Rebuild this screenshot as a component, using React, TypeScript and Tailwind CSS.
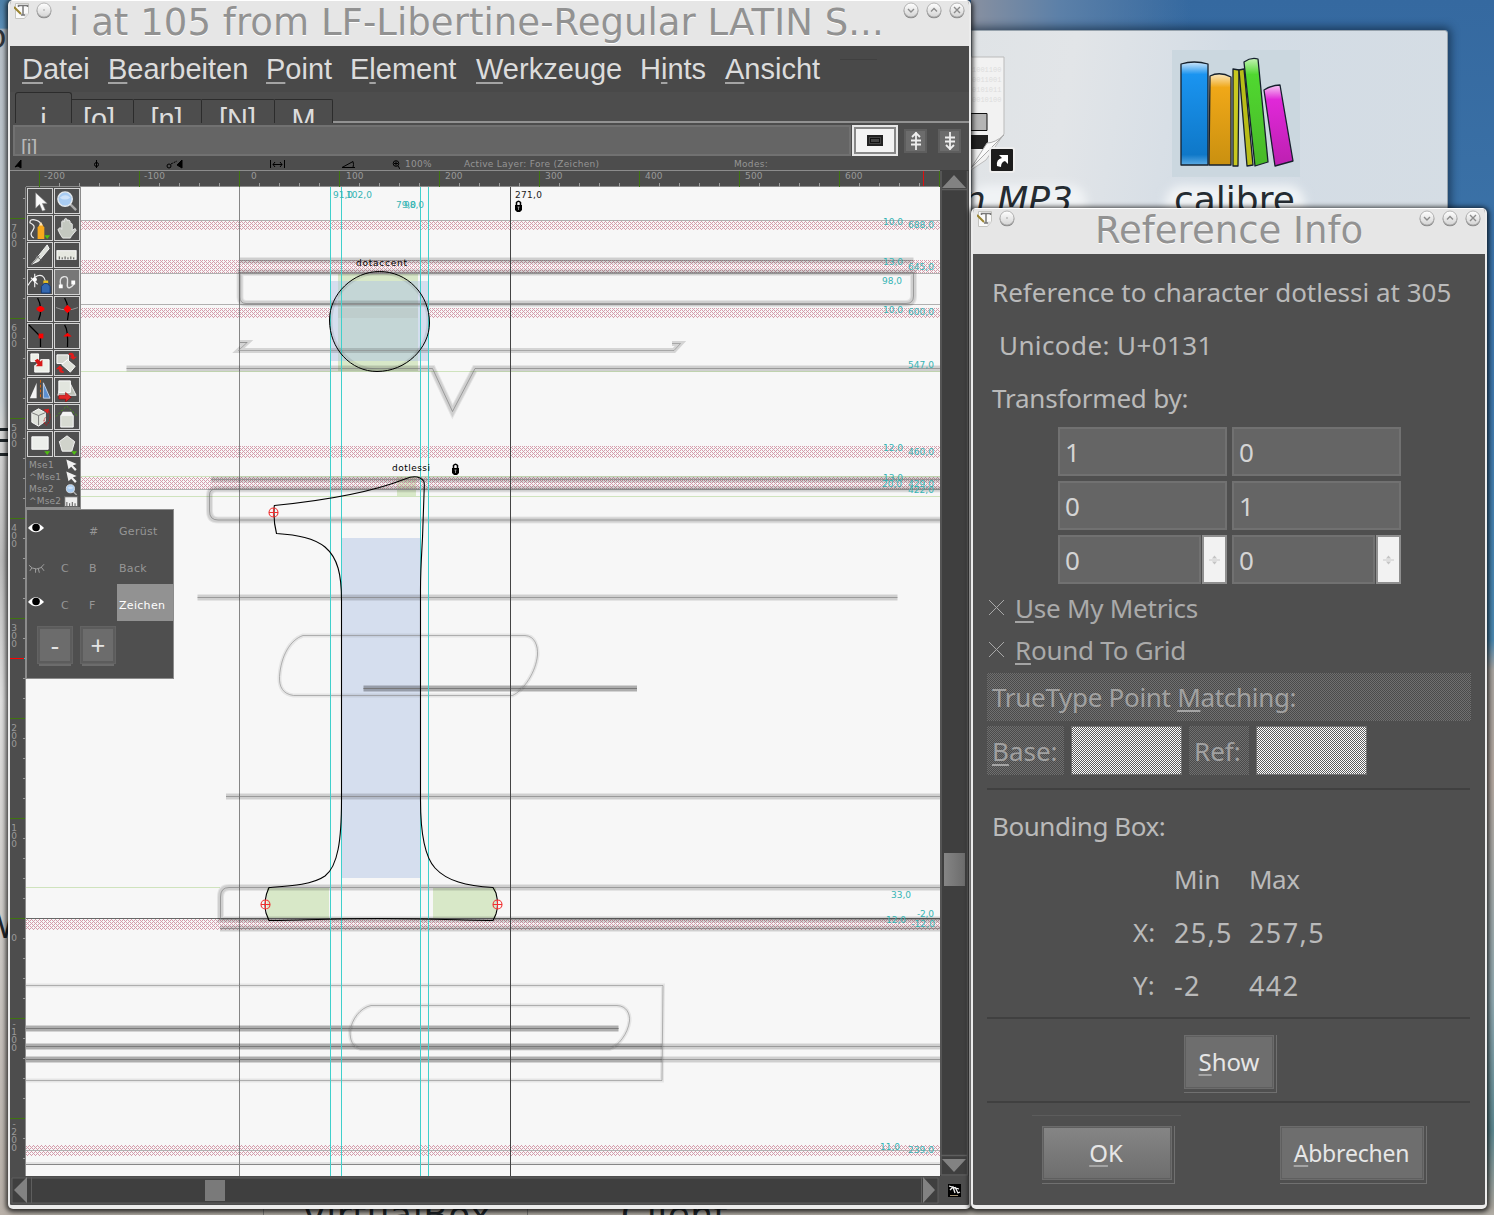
import React from "react";

const range = (from: number, to: number, step: number) => {
  const out: number[] = [];
  for (let v = from; v <= to; v += step) out.push(v);
  return out;
};

function Key({ children }: { children: React.ReactNode }) {
  return <span className="underline decoration-[#a4a4a4] decoration-2 underline-offset-[3px] [text-decoration-skip-ink:none]">{children}</span>;
}

function Knob({ d }: { d: string }) {
  return (
    <svg width="18" height="18" viewBox="0 0 18 18" fill="none">
      <circle cx="9" cy="9.900" r="7.400" fill="#8c8c8c" />
      <circle cx="9" cy="9" r="7" fill="url(#knob)" stroke="#a8a8a8" strokeWidth=".8" />
      <path d={d} stroke="#8c8c8c" strokeWidth="1.400" />
    </svg>
  );
}

function TitleBar({ title, className, textClass }: { title: string; className: string; textClass: string }) {
  return (
    <div className={"relative flex items-start shrink-0 bg-[#e6e6e6] border-t border-white " + className}>
      <svg width="16" height="16" viewBox="0 0 16 16" className="mt-[2px] ml-[4px]">
        <path d="M1.500.5h13v10l-4 5h-9z" fill="#fafafa" stroke="#c4c4c0" />
        <path d="M14.500 10.500h-4v5z" fill="#ddd" />
        <path d="M4.500 4V2.500h9V4M9 2.500V12M7 12h4" fill="none" stroke="#777" strokeWidth="1.500" />
        <path d="M0 4l7 7" stroke="#9a8430" strokeWidth="2" />
      </svg>
      <div className="ml-[5px]"><Knob d="M8.500 9h1" /></div>
      <div className={"flex-1 whitespace-nowrap font-['DejaVu_Sans'] text-[#929292] [text-shadow:0_1px_0_#fff] " + textClass}>{title}</div>
      <div className="absolute right-[3px] top-0 flex gap-[5px]">
        <Knob d="M6 8l3 3 3-3" />
        <Knob d="M6 10.500l3-3 3 3" />
        <Knob d="M6 6l6 6M12 6l-6 6" />
      </div>
    </div>
  );
}

const topLabels: [number, string][] = [[44, "-200"], [144, "-100"], [251, "0"], [346, "100"], [445, "200"], [545, "300"], [645, "400"], [745, "500"], [845, "600"]];

function TopRuler() {
  return (
    <svg className="block shrink-0" width="930" height="17" viewBox="10 170 930 17" shapeRendering="crispEdges">
      <rect x="10" y="170" width="930" height="17" fill="#4d4d4d" />
      <path d="M10 170.500H940M26 186.500H940" stroke="#8c8c8c" />
      {range(39, 939, 20).map((x) => {
        const major = (x - 39) % 100 === 0;
        return <path key={x} d={`M${x + 0.5} ${major ? 171 : 183}V187`} stroke={major ? "#3f7410" : "#9a9a9a"} />;
      })}
      <path d="M923.500 171V186" stroke="#e01010" />
      {topLabels.map(([x, s]) => (
        <text key={s} x={x} y="179" fontSize="9" letterSpacing="0.200" fill="#9a9a9a">{s}</text>
      ))}
    </svg>
  );
}

const sideLabels: [number, string][] = [[231, "700"], [331, "600"], [431, "500"], [531, "400"], [631, "300"], [731, "200"], [831, "100"], [941, "0"], [1027, "-100"], [1127, "-200"]];

function SideRuler() {
  return (
    <svg className="block shrink-0" width="16" height="989" viewBox="10 187 16 989" shapeRendering="crispEdges">
      <rect x="10" y="187" width="16" height="989" fill="#4d4d4d" />
      {range(198, 1170, 20).map((y) => {
        const major = (y - 218) % 100 === 0;
        return <path key={y} d={`M${major ? 10 : 23} ${y + 0.5}H26`} stroke={major ? "#3f7410" : "#9a9a9a"} />;
      })}
      <path d="M10 658.500H24" stroke="#f00" />
      <path d="M24 658.500H26" stroke="#2cc" />
      <path d="M25.500 187V1176" stroke="#8c8c8c" />
      {sideLabels.map(([y, s]) =>
        s.split("").map((c, i) => (
          <text key={s + i} x="13.500" textAnchor="middle" dx=".5" y={y + i * 8} fontSize="9" fill="#9a9a9a">{c}</text>
        ))
      )}
    </svg>
  );
}

const stems = [
  "M240 260.500H913.500",
  "M240 272.500H913.500V296Q913.500 303.500 906 303.500H246Q240 303.500 240 297Z",
  "M126.500 368.500H432.500L452.500 411.500L475 368.500H940",
  "M211 479.500H940",
  "M940 489H216Q209.500 489 209.500 495V511Q209.500 520 218 520H940",
  "M197.500 597.500H897.500",
  "M363.500 688.500H637",
  "M363.500 688.500H637",
  "M226 796.500H940",
  "M940 887.500H229Q220.500 887.500 220.500 897V919.500H940",
  "M220 928.500H940",
  "M26 1028.500H618.500",
  "M26 1028.500H618.500",
  "M26 1046.500H940",
  "M26 1046.500H662",
  "M26 1059.500H940",
  "M26 1059.500H662",
];
const thin = [
  "M247.500 342.500H240L247 342.500L238.500 350.500H674L680.500 343.500H672",
  "M303 635.500H525C535 636 538 646 537.500 655C536 672 524 690 512.500 695.500H293.500C283 694 279 687 279.500 676.500C281 656 290 640 303 635.500Z",
  "M26 985.500H663L662 1080.500H26",
  "M371 1005.500H617C627 1006 630 1014 629.500 1021C628 1034 618 1046 610 1049H360C352 1046 350 1040 350 1031C352 1019 360 1008 371 1005.500Z",
];
const bands: [number, number][] = [[221, 9], [260, 13], [308, 10], [446, 12], [477, 12], [919, 11], [1145, 11]];
const notes: [number, number, string][] = [
  [333, 198, "91,0"], [346, 198, "102,0"], [396, 208, "79,0"], [404, 208, "98,0"],
  [883, 225, "10,0"], [908, 227.5, "688,0"], [883, 265, "13,0"], [908, 270, "645,0"], [882, 284, "98,0"],
  [883, 313, "10,0"], [908, 315, "600,0"], [908, 368, "547,0"], [883, 451, "12,0"], [908, 455, "460,0"],
  [883, 481, "13,0"], [882, 487, "20,0"], [908, 487, "429,0"], [908, 493, "422,0"], [891, 898, "33,0"],
  [917, 917, "-2,0"], [886, 923, "12,0"], [911, 927, "-12,0"], [880, 1150, "11,0"], [908, 1153, "239,0"],
];

function Lock({ x, y }: { x: number; y: number }) {
  return (
    <g transform={`translate(${x} ${y})`}>
      <path d="M-2 -1V-3.500Q0 -6 2 -3.500V-1" fill="none" stroke="#000" strokeWidth="1.500" />
      <path d="M-3.500 -1H3.500V4L1.500 6H-1.500L-3.500 4Z" fill="#000" />
      <path d="M-1 1h2M0 1v3" stroke="#aaa" strokeWidth=".8" />
    </g>
  );
}

function Canvas() {
  return (
    <svg className="block" width="914" height="989" viewBox="26 187 914 989" fill="none">
      <defs>
        <pattern id="hatch" width="4" height="4" patternUnits="userSpaceOnUse">
          <path d="M0 0h1v1h-1zM2 0h1v1h-1zM1 1h1v1h-1zM0 2h1v1h-1zM2 2h1v1h-1zM3 3h1v1h-1z" fill="#d59cab" shapeRendering="crispEdges" />
        </pattern>
      </defs>
      <rect x="26" y="187" width="914" height="989" fill="#f7f7f7" />
      <g shapeRendering="crispEdges">
        <path d="M397 477h19v20h-19zM267 888h62v31h-62zM433 888h63v31h-63zM338 273h80v99h-80z" fill="#d8e8c8" />
        <path d="M341 538h79v340h-79zM331 281h98v80h-98z" fill="#d5deee" />
        {bands.map(([y, h]) => <rect key={y} x="26" y={y} width="914" height={h} fill="url(#hatch)" />)}
        <path d="M331 308h98v10h-98z" fill="#d5deee" />
        <path d="M338 281h80v80h-80z" fill="#c4d6d6" />
        <path d="M338 308h80v10h-80z" fill="#becdcc" />
        <path d="M26 220.500H940M26 273.500H940M26 304.500H940M26 489.500H940M26 1150.500H940" stroke="#b0b0b0" />
        <path d="M26 371.500H940M26 476.500H940M26 496.500H940M26 887.500H220" stroke="#cfe3bd" />
        <path d="M26 1164.500H940" stroke="#868686" />
        <path d="M26 1163H940" stroke="#e2e2e2" strokeWidth="2" />
        <path d="M239.500 187V1176" stroke="#868686" />
        <path d="M26 918.500H940" stroke="#666" />
      </g>
      {stems.map((d, i) => (
        <g key={i}>
          <path d={d} stroke="#000" strokeOpacity=".075" strokeWidth="7" />
          <path d={d} stroke="#000" strokeOpacity=".09" strokeWidth="5" />
          <path d={d} stroke="#777" strokeOpacity=".6" />
        </g>
      ))}
      {thin.map((d, i) => (
        <g key={i}>
          <path d={d} stroke="#000" strokeOpacity={i ? 0.07 : 0.14} strokeWidth={i ? 4 : 5} />
          <path d={d} stroke="#888" strokeOpacity=".6" />
        </g>
      ))}
      <path d="M330.500 187V1176M341.500 187V1176M420.500 187V1176M428.500 187V1176" stroke="#40d0cc" shapeRendering="crispEdges" />
      <path d="M510.500 187V1176" stroke="#444" shapeRendering="crispEdges" />
      <g strokeLinejoin="round">
        <circle cx="379.500" cy="321.500" r="48.500" stroke="#000" strokeOpacity=".08" strokeWidth="3" />
        <path d="M379.500 271.500C407 271.500 429.500 294 429.500 323C429.500 348 406 371.500 377 371.500C351 371.500 329.500 349 329.500 320C329.500 294 353 271.500 379.500 271.500Z" stroke="#000" />
        <path
          d="M274.300 505.500C320 501 372 492 405 479C412 476 416 476 420 478C424 480 424.500 482 424.300 486L422.500 538C421.500 556 420.500 570 420.500 590V800C420.500 830 424 856 435 868C447 881 466 886 493 887.500L496 893Q499 905 496 914L493 920.500C470 920.500 430 918.500 380 918.500C330 918.500 295 920.500 269 920.500L266 913Q264 904 266.500 894L269 887.500C290 886 312 885 325 876C338 866 341.500 840 341.500 800V600C341.500 575 338 558 325 547C314 538 298 535 276.500 533.500Q273 520 274.300 505.500Z"
          stroke="#000" strokeWidth="1.100"
        />
      </g>
      {[[273.5, 512.5], [265.5, 904.5], [497.5, 904.5]].map(([x, y]) => (
        <g key={x} stroke="#f03030" strokeWidth="1.100">
          <circle cx={x} cy={y} r="4.500" />
          <path d={`M${x - 4.5} ${y}h9M${x} ${y - 4.5}v9`} />
        </g>
      ))}
      <g fontSize="9">
        {notes.map(([x, y, s], i) => (
          <text key={i} x={x} y={y} fill="#35b4b4" textLength={s === "-12,0" ? 24 : s.length === 5 ? 26 : s.startsWith("-") ? 17 : 20}>{s}</text>
        ))}
        <text x="515" y="198" fill="#222" textLength="27">271,0</text>
        <text x="356" y="266" fill="#000" textLength="51">dotaccent</text>
        <text x="392" y="471" fill="#000" textLength="38">dotlessi</text>
      </g>
      <Lock x={518.5} y={206} />
      <Lock x={455.5} y={469} />
    </svg>
  );
}

const dropMark = <path d="M17 20h6l-3 4z" fill="#4fc010" />;
const redArrow = <path d="M2 15h7v-3l6 5-6 5v-3H2z" fill="#e02828" stroke="#900" strokeWidth=".6" />;
const lens = (
  <>
    <path d="M15 15l7 7" stroke="#aaa" strokeWidth="2.500" />
    <circle cx="10.500" cy="10.500" r="7.500" fill="#a9ccf2" stroke="#e4e9ee" strokeWidth="1.500" />
    <path d="M5 9q6-5 11 0-6 4-11 0" fill="#cfe2f8" />
  </>
);
const tools: React.ReactNode[] = [
  <path d="M8 4v16l4-4 3 7 3-1-3-7h5z" fill="#fafafa" stroke="#888" strokeWidth=".6" />,
  lens,
  <><path d="M6 23Q1 20 5 15T2 7Q2 3 7 4t6 4" fill="none" stroke="#eee" strokeWidth="1.300" /><path d="M10 24V12l3.500-5 3.500 5v12z" fill="#f6a81c" /><path d="M11.500 10l2-4 2 4z" fill="#fbe3b8" /><path d="M17 20h6l-3 4z" fill="#4fc010" /></>,
  <path d="M8 23q-3-4-5-9l2.500-2L7 14V6q1-2.500 2.700 0V3.500q1.500-2 3 0V5q2-2 3 .5L16 8q1.500-1 2 .5V15l3-2 1 2-5 6-1 2z" fill="#c4c8c0" stroke="#f2f2f2" strokeWidth=".9" />,
  <><path d="M20 2L4 22l7-3L22 6z" fill="#dde0da" stroke="#f8f8f8" /><path d="M8 13l6 5M4 22l8-9" stroke="#666" fill="none" /></>,
  <><rect x="2" y="8" width="20" height="9" fill="#e6e8e0" stroke="#fff" /><path d="M4.500 17v-3M7.500 17v-2M10.500 17v-3M13.500 17v-2M16.500 17v-3M19.500 17v-2" stroke="#444" /></>,
  <><path d="M0 16q4-7 10-10 6-2 8 5M7 4v14M3 8l7 7" stroke="#f2f2f2" fill="none" strokeWidth="1.200" /><circle cx="7" cy="10" r="2.300" fill="#fff" /><path d="M16 11h5v3h-5z" fill="#e8c020" /><path d="M14 24v-7l3-3h3l3 3v7z" fill="#3468b0" stroke="#153c78" /></>,
  <><rect width="25" height="25" fill="#777" /><path d="M6 16q-2-8 3-9t4 6 3 5 4-6" stroke="#e0e0e0" fill="none" strokeWidth="1.500" /><path d="M4 15h4v4H4zM17 11h4v4h-4z" fill="#fff" /></>,
  <><path d="M10 1q6 11 1 23" fill="none" stroke="#000" strokeWidth="1.300" /><path d="M9 11h8v3H9z" fill="#f00" /><circle cx="13" cy="12.500" r="3" fill="#f00" /></>,
  <><path d="M1 11q11 5 23 0" fill="none" stroke="#999" /><path d="M10 1q6 11 3 23" fill="none" stroke="#000" strokeWidth="1.300" /><path d="M13 8l4 4.500-4 4.500-4-4.500z" fill="#f00" /><circle cx="13" cy="12.500" r="3" fill="#f00" /></>,
  <><path d="M1 1l12 12v11" fill="none" stroke="#000" strokeWidth="1.300" /><path d="M11 10h5v5h-5z" fill="#f00" /></>,
  <><path d="M10 1q4 6 3 23" fill="none" stroke="#000" strokeWidth="1.300" /><path d="M8.500 13l4.500-4 4.500 4z" fill="#f00" /></>,
  <><path d="M3 3h8v8H3zM13 9h9v13H7v-7" fill="#ecefe8" stroke="#fff" /><path d="M7 10l3-2 3 3 2-2v7H8l2-2z" fill="#d81818" /></>,
  <><path d="M2 4h12v9H2z" fill="#d4d7d0" stroke="#fff" /><path d="M13 9l8 7-5 6-9-8z" fill="#dfe2da" stroke="#fff" /><path d="M15 2q5-1 5 4h3l-4 3-4-3h2q0-2-3-2zM9 23q-5 0-5-4H1l4-4 4 4H7q0 2 2 2z" fill="#e01c1c" /></>,
  <><path d="M9 5v16H2z" fill="#f4f4f4" /><path d="M13 2v20" stroke="#e06a10" strokeDasharray="3 2" /><path d="M16 5v16h7z" fill="#5b8fd0" stroke="#dce8f8" strokeWidth=".8" /></>,
  <><path d="M15 4l7 14H9l-6 0 4-14z" fill="#b9bdb4" stroke="#eee" /><path d="M4 3h12v12H4z" fill="#e2e5de" stroke="#fff" /><g transform="translate(2 3)">{redArrow}</g></>,
  <><path d="M4 8l7-4 7 4v9l-7 5-7-4z" fill="#dfe2da" stroke="#fff" /><path d="M4 8l7 3 7-3M11 11v10" stroke="#777" fill="none" /><path d="M16 5l6-1-1 5z" fill="#e02020" /><path d="M22 6q3 10-3 15-4-3-1-8" stroke="#c01010" fill="none" strokeDasharray="2 1" /></>,
  <><path d="M1 12L12 1l12 11" stroke="#4aa010" fill="none" strokeDasharray="2 2" /><path d="M6 11h13v12H6z" fill="#d8dbd2" stroke="#fafafa" /><path d="M8 7h9l2 4H6z" fill="#f4f4f4" /></>,
  <><path d="M4 5h17v13H4z" fill="#eceeea" stroke="#fff" />{dropMark}</>,
  <><path d="M12.500 4l8 6-3 10h-10l-3-10z" fill="#d0d3cb" stroke="#f4f4f4" />{dropMark}</>,
];

function ToolPalette() {
  return (
    <div className="w-[55px] h-[322px] bg-[#4f4f4f] border-r border-[#8c8c8c] border-b-2">
      <div className="grid grid-cols-2 gap-x-[1px] gap-y-[1px] pt-[1px] pl-[1px]">
        {tools.map((t, i) => (
          <div key={i} className="w-[26px] h-[26px] border border-[#d4d4d4]">
            <svg width="24" height="24" viewBox="0 0 25 25" className="block">{t}</svg>
          </div>
        ))}
      </div>
      <div className="relative pl-[3px] pt-[2px] text-[9px] leading-[12px] tracking-[0.3px] text-[#999]">
        {["Mse1", "^Mse1", "Mse2", "^Mse2"].map((s, i) => (
          <div key={s} className="flex justify-between pr-px">
            <span className={i % 2 ? "tracking-[0.2px]" : ""}>{s}</span>
            <svg width="15" height="12" viewBox="0 0 25 22" className="shrink-0">
              {i < 2 ? <path d="M3 1l4 18 5-5 7 8 3-3-7-7 7-3z" fill="#f2f2f2" /> : i === 2 ? lens : <path d="M0 3h24v18H0z M4 20v-7M9 20v-5M14 20v-7M19 20v-5" fill="#eee" stroke="#666" strokeWidth="2" />}
            </svg>
          </div>
        ))}
      </div>
    </div>
  );
}

function Eye({ open }: { open: boolean }) {
  return (
    <svg width="17" height="12" viewBox="0 0 18 12" fill="none">
      {open ? (
        <><path d="M0 6Q8-4 17 6Q8 15 0 6z" fill="#fff" /><circle cx="8.500" cy="5.500" r="4" fill="#000" /></>
      ) : (
        <path d="M1 3q3 4 8 4t8-5M4 6l-2 3M8 7v4M11 7l1 4M14 5l3 4" stroke="#a4a4a4" />
      )}
    </svg>
  );
}

function Layers() {
  const rows: [boolean, string, string, string][] = [[true, "", "#", "Gerüst"], [false, "C", "B", "Back"], [true, "C", "F", "Zeichen"]];
  return (
    <div className="w-[148px] h-[170px] bg-[#4f4f4f] border border-[#8c8c8c] text-[11px] tracking-[0.3px] text-[#969696]">
      <div>
        {rows.map(([open, c, k, name], i) => (
          <div key={name} className="flex h-[37px] items-center">
            <div className={"w-[34px] pl-px " + (open ? "-mt-[2px]" : "mt-[4px]")}><Eye open={open} /></div>
            <span className="w-[28px] mt-[7px]">{c}</span>
            <span className="w-[28px] mt-[7px]">{k}</span>
            <span className={"flex-1 h-[37px] leading-[43px] pl-[2px] whitespace-nowrap " + (i === 2 ? "bg-[#929292] text-white" : "")}>{name}</span>
          </div>
        ))}
      </div>
      <div className="flex gap-[9px] pl-[11px] pt-[6px]">
        {["-", "+"].map((s) => (
          <div key={s} className="w-[34px] h-[36px] bg-[#6c6c6c] border-2 border-[#5c5c5c] outline outline-[#636363] text-[#e4e4e4] font-['Noto_Sans'] text-[26px] leading-[32px] text-center shadow-[0_4px_0_-1px_#6c6c6c]">{s}</div>
        ))}
      </div>
    </div>
  );
}

function ArrowBtn({ up }: { up?: boolean }) {
  return (
    <div className="flex w-[23px] h-[24px] items-center justify-center bg-[#6c6c6c] border-2 border-[#5e5e5e]">
      <svg width="14" height="20" viewBox="0 0 14 20" fill="none" stroke="#eee" strokeWidth="1.800" className={"shrink-0 " + (up ? "" : "rotate-180")}>
        <path d="M7 1v18M3 6l4-4 4 4M2 9.500h10M2 13.500h10" />
      </svg>
    </div>
  );
}

function EditorWindow() {
  const menus: [string, string, string, string][] = [
    ["", "D", "atei", "w-[86px]"], ["", "B", "earbeiten", "w-[158px]"], ["", "P", "oint", "w-[84px]"], ["E", "l", "ement", "w-[126px]"],
    ["", "W", "erkzeuge", "w-[164px]"], ["H", "i", "nts", "w-[85px]"], ["", "A", "nsicht", "w-[100px]"],
  ];
  const tabs: [string, string, string][] = [["[o]", "w-[62px]", "pr-[7px]"], ["[n]", "w-[68px]", "pr-[2px]"], ["[N]", "w-[73px]", "pr-[1px]"], ["M", "w-[58px]", ""]];
  return (
    <div className="absolute left-[8px] top-0 w-[963px] h-[1209px] flex flex-col bg-[#4d4d4d] border-x-2 border-b-4 border-[#ececec] rounded-[5px] shadow-[0_1px_5px_2px_rgba(0,0,0,0.75)] overflow-hidden">
      <TitleBar title="i at 105 from LF-Libertine-Regular LATIN S..." className="h-[46px]" textClass="text-[37px] leading-[44px] ml-[16px] tracking-[0.050px]" />
      <div className="flex shrink-0 h-[46px] pl-[12px] bg-[#494949] font-['Liberation_Sans'] text-[29px] leading-[46px] text-[#dcdcdc]">
        {menus.map(([a, k, b, w]) => (
          <div key={b} className={"whitespace-nowrap " + w}>{a}<Key>{k}</Key>{b}</div>
        ))}
        <div className="mt-[13px] ml-[15px] h-px w-[37px] bg-[#404040]" />
      </div>
      <div className="flex shrink-0 items-start h-[31px] overflow-hidden pl-[5px] font-['Liberation_Sans'] text-[29px] text-[#dcdcdc] text-center">
        <div className="w-[57px] h-[31px] border border-b-0 border-[#2c2c2c] rounded-t-[3px] leading-[52px]">i</div>
        {tabs.map(([t, w, p]) => (
          <div key={t} className={"mt-[7px] h-[24px] border-t border-r border-[#2c2c2c] rounded-tr-[2px] leading-[38px] " + w + " " + p}>{t}</div>
        ))}
        <div className="flex-1 self-end h-[2px] mb-0 bg-[#929292]" />
      </div>
      <div className="flex shrink-0 h-[33px] pt-[2px] items-start">
        <div className="ml-[3px] w-[838px] h-[31px] overflow-hidden bg-[#656565] border-2 border-[#717171] pl-[6px] font-['Liberation_Sans'] text-[21px] leading-[40px] text-[#b8b8b8]">[i]</div>
        <div className="ml-px flex w-[46px] h-[31px] items-center justify-center bg-[#f4f4f4] border-2 border-[#e8e8e8] outline-2 -outline-offset-4 outline-[#888]">
          <div className="w-[16px] h-[11px] border-2 border-[#222] bg-[#444] outline outline-[#111] -outline-offset-4" />
        </div>
        <div className="flex gap-[11px] ml-[6px] mt-[4px]"><ArrowBtn up /><ArrowBtn /></div>
      </div>
      <div className="flex shrink-0 h-[14px] text-[9px] leading-[16px] tracking-[0.3px] text-[#959595]">
        <svg width="390" height="14" viewBox="10 156 390 14" fill="none" stroke="#000" className="mr-[5px]">
          <path d="M21 160v8l-3-2-3 1z" fill="#000" />
          <path d="M96.500 160v8" /><circle cx="96.500" cy="164.500" r="2" />
          <circle cx="169" cy="166" r="2" /><path d="M171 164l6-3" strokeDasharray="2 1" /><path d="M182 160v8l-5-3z" fill="#000" />
          <path d="M270.500 160v8M284.500 160v8M273 164.500h9M275 162l-2 2.500 2 2.500M280 162l2 2.500-2 2.500" />
          <path d="M355 167.500h-13l11-6q1 3 0 6" />
          <circle cx="396" cy="163.500" r="2.800" /><path d="M394 163.500h4M396 161.500v4M398 166l2 3" />
        </svg>
        <span className="w-[59px]">100%</span>
        <span className="w-[270px] whitespace-nowrap">Active Layer: Fore (Zeichen)</span>
        <span>Modes:</span>
      </div>
      <div className="flex shrink-0">
        <div className="flex flex-col">
          <TopRuler />
          <div className="flex">
            <SideRuler />
            <div className="relative">
              <Canvas />
              <div className="absolute left-0 top-0"><ToolPalette /><Layers /></div>
            </div>
          </div>
        </div>
        <svg width="29" height="1006" viewBox="940 170 29 1006">
          <defs><linearGradient id="grip"><stop stopColor="#858585" /><stop offset="1" stopColor="#6c6c6c" /></linearGradient></defs>
          <path d="M940 170h29v1006h-29z" fill="#3f3f3f" />
          <path d="M941 171V1175M967.500 171V1175H941M942 189.500H967M941 1155.500H967" stroke="#5e5e5e" fill="none" strokeWidth="1.500" />
          <path d="M942 188l12-13 12 13zM942 1159l12 13 12-13z" fill="#828282" />
          <rect x="944" y="853" width="21" height="33" fill="url(#grip)" />
        </svg>
      </div>
      <svg className="shrink-0" width="959" height="29" viewBox="10 1176 959 29">
        <path d="M10 1176h959v29H10z" fill="#4d4d4d" />
        <path d="M12 1178h926v25H12z" fill="#3f3f3f" stroke="#5e5e5e" />
        <path d="M31.500 1177v26M921.500 1177v26" stroke="#5e5e5e" />
        <path d="M27 1177v26l-13-13zM923 1177v26l12-13z" fill="#828282" />
        <path d="M205 1180h20v21h-20z" fill="#7a7a7a" />
        <path d="M948 1184h13v13h-13z" fill="#000" />
        <path d="M949 1186l10 3M950 1190l3-3 2 6M955 1187l3 6 2-1" stroke="#eee" strokeWidth="1.300" fill="none" />
        <path d="M950 1195.500h8" stroke="#a09070" />
      </svg>
    </div>
  );
}

const dither = "[background-image:conic-gradient(#707070_25%,#4a4a4a_0_50%,#707070_0_75%,#4a4a4a_0)] [background-size:2px_2px]";
const ditherLight = "[background-image:conic-gradient(#fff_25%,#5c5c5c_0_50%,#fff_0_75%,#5c5c5c_0)] [background-size:2px_2px]";

function Separator({ className }: { className: string }) {
  return <div className={"shrink-0 h-[2px] w-[483px] bg-[#404040] ml-[14px] " + className} />;
}

function Entry({ v, spin }: { v: string; spin?: boolean }) {
  const box = "h-[49px] bg-[#656565] border-2 border-[#717171] pl-[5px] leading-[46px]";
  if (!spin) return <div className={"w-[169px] " + box}>{v}</div>;
  return (
    <div className="flex w-[169px] gap-px">
      <div className={"flex-1 " + box}>{v}</div>
      <div className="w-[25px] h-[49px] border-2 border-[#8f8f8f] bg-[#f2f2f2] flex items-center justify-center">
        <svg width="11" height="10" viewBox="0 0 11 10"><path d="M0 5h11" stroke="#c4c4c4" strokeWidth=".9" /><path d="M5.500 .5l2.500 3h-5zM5.500 9.500l2.500-3h-5z" fill="#c4c4c4" /></svg>
      </div>
    </div>
  );
}

function Button({ k, children, className }: { k: string; children: string; className: string }) {
  return (
    <div className="border-r border-b border-[#707070] pr-[2px] pb-[3px]">
      <div className={"h-[54px] border-2 border-[#5f5f5f] outline outline-[#6c6c6c] -outline-offset-1 text-center leading-[50px] text-[#e6e6e6] " + className}>
        <Key>{k}</Key>{children}
      </div>
    </div>
  );
}

function Check({ k, children }: { k: string; children: string }) {
  return (
    <div className="flex h-[42px] items-center pl-[16px] text-[#aaa] tracking-[-0.250px]">
      <svg width="15" height="15" viewBox="0 0 15 15" className="mr-[11px] -mt-[2px]"><path d="M0 0l15 15M15 0L0 15" stroke="#a8a8a8" /></svg>
      <span><Key>{k}</Key>{children}</span>
    </div>
  );
}

function ReferenceDialog() {
  return (
    <div className="absolute left-[971px] top-[208px] w-[516px] h-[1001px] flex flex-col bg-[#4f4f4f] border-x-2 border-b-4 border-[#ececec] rounded-[5px] shadow-[0_1px_5px_2px_rgba(0,0,0,0.75)] overflow-hidden font-['Noto_Sans'] text-[26px] text-[#bababa]">
      <TitleBar title="Reference Info" className="h-[46px]" textClass="text-[37px] leading-[44px] ml-[79px]" />
      <div className="shrink-0 pl-[19px] pt-[12px] leading-[53px] h-[173px]">
        <div className="whitespace-nowrap">Reference to character dotlessi at 305</div>
        <div className="pl-[7px] tracking-[0.4px]">Unicode: U+0131</div>
        <div className="tracking-[-0.2px]">Transformed by:</div>
      </div>
      <div className="shrink-0 grid grid-cols-[169px_169px] gap-[5px] ml-[85px] text-[#d4d4d4]">
        <Entry v="1" /><Entry v="0" /><Entry v="0" /><Entry v="1" /><Entry v="0" spin /><Entry v="0" spin />
      </div>
      <div className="pt-[3px]"><Check k="U">se My Metrics</Check><Check k="R">ound To Grid</Check></div>
      <div className={"shrink-0 mt-[2px] ml-[14px] w-[484px] h-[48px] pl-[5px] leading-[48px] tracking-[-0.3px] text-[#a0a0a0] " + dither}>TrueType Point <Key>M</Key>atching:</div>
      <div className="shrink-0 flex gap-[7px] ml-[14px] mt-[5px] h-[49px] leading-[51px] text-[#a0a0a0]">
        <div className={"w-[77px] pl-[5px] " + dither}><Key>B</Key>ase:</div>
        <div className={"w-[111px] border border-[#707070] " + ditherLight} />
        <div className={"w-[60px] pl-[5px] " + dither}>Ref:</div>
        <div className={"w-[111px] border border-[#707070] " + ditherLight} />
      </div>
      <Separator className="mt-[13px]" />
      <div className="shrink-0 pl-[19px] mt-[10px] leading-[53px] tracking-[-0.450px]">Bounding Box:</div>
      <div className="shrink-0 grid grid-cols-[42px_75px_90px] pl-[160px] leading-[53px] h-[159px]">
        <span /><span className="-ml-px">Min</span><span className="-ml-px tracking-[-0.5px]">Max</span>
        <span>X:</span><span className="-ml-px text-[27px] tracking-[1.3px]">25,5</span><span className="-ml-px text-[27px] tracking-[1.4px]">257,5</span>
        <span>Y:</span><span className="-ml-px text-[27px] tracking-[1.3px]">-2</span><span className="-ml-px text-[27px] tracking-[1.4px]">442</span>
      </div>
      <Separator className="mt-[5px]" />
      <div className="shrink-0 flex ml-[211px] mt-[16px]"><Button k="S" className="w-[90px] text-[24px] bg-[#6e6e6e]">how</Button></div>
      <Separator className="mt-[8px]" />
      <div className="ml-[59px] mt-[12px] h-px w-[149px] bg-[#5c5c5c]" />
      <div className="flex justify-between pl-[69px] pr-[58px] mt-[10px]">
        <Button k="O" className="w-[130px] text-[24px] pr-[2px] bg-gradient-to-b from-[#858585] to-[#6e6e6e]">K</Button>
        <Button k="A" className="w-[144px] text-[23px] tracking-[-0.2px] pr-px bg-[#6e6e6e]">bbrechen</Button>
      </div>
    </div>
  );
}

function Desktop() {
  return (
    <>
      <div className="absolute left-0 top-0 w-[20px] h-full bg-[linear-gradient(#4d80a8_0,#5b8fb8_28px,#b8c0c8_30px,#c8d0d4_400px,#d8d8d8_430px,#bcbcbc_560px,#e0e0e0_700px,#b8b0a8_1215px)]" />
      <div className="absolute -left-[14px] top-[10px] font-['Noto_Sans'] text-[34px] text-[#30363c]">o</div>
      <div className="absolute -left-[18px] top-[900px] font-['Noto_Sans'] text-[34px] text-[#20262c]">W</div>
      <div className="absolute left-0 top-[428px] w-[9px] h-[28px] border-y-[3px] border-[#22282c]"><div className="mt-[8px] h-[3px] bg-[#22282c]" /></div>
      <div className="absolute left-[971px] top-[30px] w-[477px] h-[300px] border border-[#97a3ad] rounded-tr-[3px] bg-[linear-gradient(100deg,#dfe3e6,#e2e5e8_20%,#d3dce5_50%,#d5dde4)] shadow-[0_0_9px_3px_rgba(10,30,50,0.6)]" />
      <svg className="absolute left-[971px] top-[40px]" width="360" height="170" viewBox="971 40 360 170">
        <defs>
          <linearGradient id="bb" x2="0" y2="1"><stop stopColor="#cfe6fa" /><stop offset=".12" stopColor="#1a94f0" /><stop offset=".9" stopColor="#0f78c8" /><stop offset="1" stopColor="#5cabe4" /></linearGradient>
          <linearGradient id="bo" x2="0" y2="1"><stop stopColor="#fbe8c0" /><stop offset=".15" stopColor="#f0a818" /><stop offset="1" stopColor="#c99010" /></linearGradient>
          <linearGradient id="bg" x2="0" y2="1"><stop stopColor="#c4f4b4" /><stop offset=".15" stopColor="#50d830" /><stop offset="1" stopColor="#48b828" /></linearGradient>
          <linearGradient id="bm" x2="0" y2="1"><stop stopColor="#f8c8f4" /><stop offset=".18" stopColor="#e028d8" /><stop offset="1" stopColor="#bc20b0" /></linearGradient>
          <linearGradient id="knob" x2="0" y2="1"><stop stopColor="#fff" /><stop offset="1" stopColor="#d4d4d4" /></linearGradient>
          <filter id="halo" x="-20%" y="-50%" width="140%" height="200%"><feGaussianBlur stdDeviation="5" /></filter>
        </defs>
        <path d="M971 57h33v77l-18 26-15 10z" fill="#f2f2f2" stroke="#bbb" />
        <g fontSize="7" fill="#ddd" fontFamily="Liberation Mono"><text x="972" y="72">1001100</text><text x="972" y="82">0011001</text><text x="972" y="92">0101011</text><text x="972" y="102">0010100</text></g>
        <path d="M971 113.500h16v17h-16z" fill="#b4b4b4" stroke="#111" /><path d="M971 135h17v14h-17z" fill="#222" />
        <path d="M987 143q8 0 17-8l-33 33z" fill="#fafafa" stroke="#aaa" />
        <rect x="990" y="148" width="24" height="24" rx="2" fill="#1c1c1c" stroke="#eee" strokeWidth="2" />
        <path d="M997 166q-1-7 5-8l-3-3h9v9l-3-3q-4 1-4 6z" fill="#fff" />
        <rect x="1172" y="50" width="128" height="127" fill="#cbd7df" />
        <g filter="url(#halo)" fill="#f0f3f5"><rect x="971" y="185" width="115" height="40" rx="16" /><rect x="1165" y="185" width="140" height="40" rx="18" /></g>
        <g stroke="#16202c" strokeWidth="1.300" strokeLinejoin="round">
          <path d="M1181 64q13-4 27 0v101h-27z" fill="url(#bb)" />
          <path d="M1210 76q10-5 21 1v88h-22z" fill="url(#bo)" />
          <path d="M1233 69l6 1 -1 96h-5z" fill="#c8c820" />
          <path d="M1239 70l5-1 9 96-6 1z" fill="#b8bc18" />
          <path d="M1244 62q7-5 14-3l10 103-13 4z" fill="url(#bg)" />
          <path d="M1264 90q8-5 16-5l13 76-18 5z" fill="url(#bm)" />
        </g>
      </svg>
      <div className="absolute left-[971px] top-[178px] flex font-['DejaVu_Sans'] text-[36px] leading-[44px] text-[#252c32]">
        <span className="w-[203px] indent-[-8px] italic whitespace-nowrap">n MP3</span>
        <span>calibre</span>
      </div>
      <div className="absolute left-[263px] top-[1194px] w-[265px] h-[30px] border-x border-[#7a7a78]" />
      <div className="absolute left-[302px] top-[1193px] flex font-['DejaVu_Sans'] text-[36px] leading-[44px] tracking-[0.5px] text-[#20262a]">
        <span className="w-[319px]">VirtualBox</span><span>Client</span>
      </div>
    </>
  );
}

export default function App() {
  return (
    <div className="relative w-[1494px] h-[1215px] overflow-hidden font-['DejaVu_Sans',sans-serif] bg-[linear-gradient(#3569a0_0,#3f78ac_400px,#4a88b0_640px,#a8a4a0_670px,#b4a8a0_780px,#8fa8b0_1000px,#5c8890_1130px,#a8a49c_1208px,#b4b0a8_1215px)]">
      <div className="absolute left-[971px] top-0 w-[220px] h-[30px] bg-[linear-gradient(90deg,#8890a0,#5c80a8_40%,transparent)]" />
      <Desktop />
      <EditorWindow />
      <ReferenceDialog />
    </div>
  );
}
